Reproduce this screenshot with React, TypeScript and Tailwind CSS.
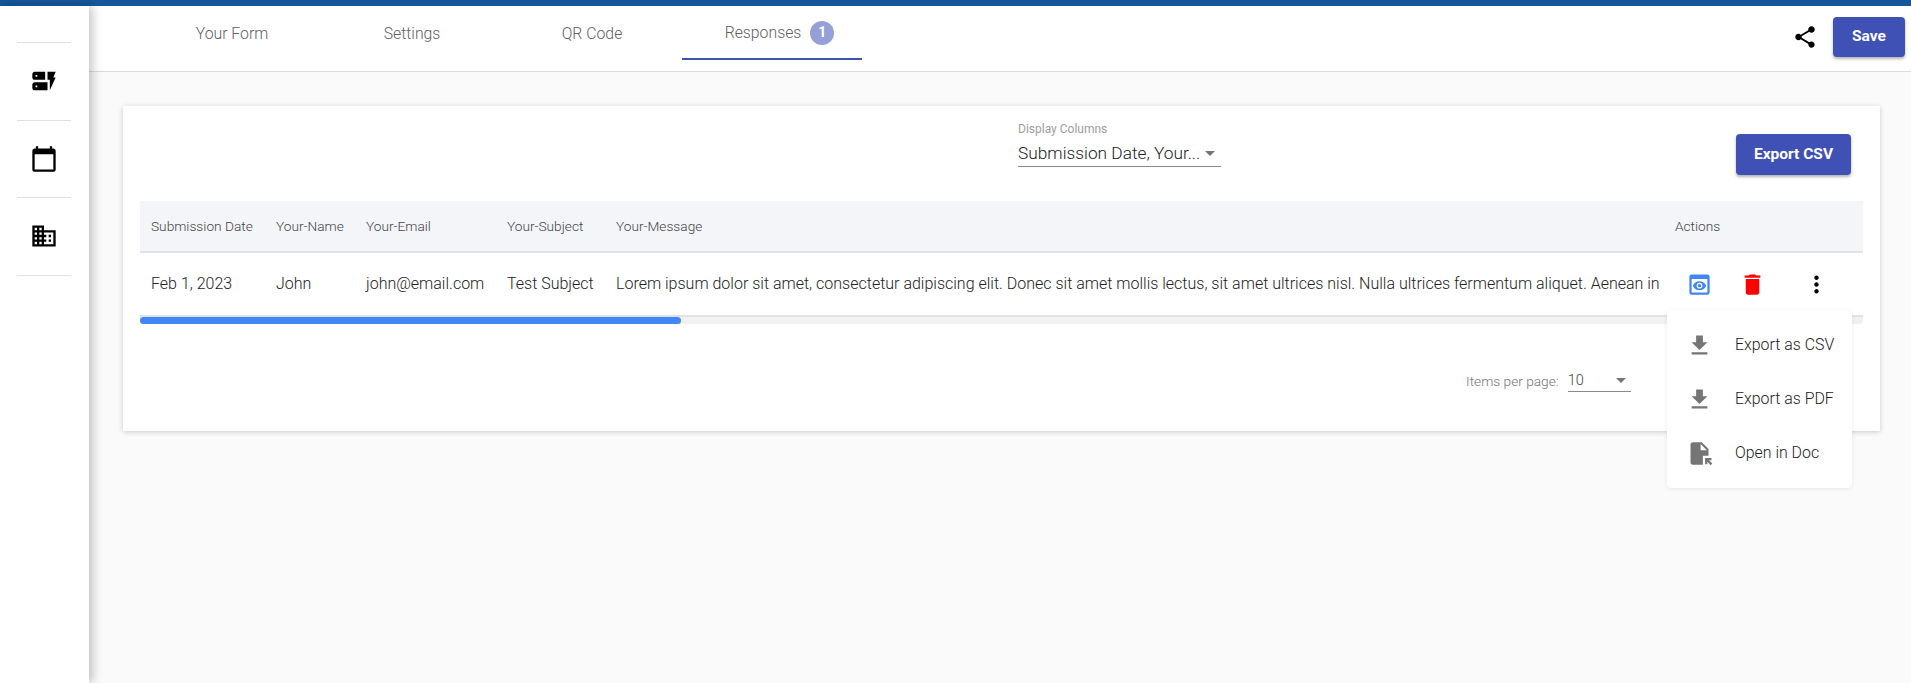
import React from 'react';
import {
  MdDynamicForm,
  MdCalendarToday,
  MdDomain,
  MdShare,
  MdPreview,
  MdDelete,
  MdMoreVert,
  MdFileDownload,
  MdFileOpen,
} from 'react-icons/md';

const navIcons = [MdDynamicForm, MdCalendarToday, MdDomain];

const tabs = ['Your Form', 'Settings', 'QR Code'];

const columns = [
  { label: 'Submission Date', value: 'Feb 1, 2023', width: 'w-[125px]' },
  { label: 'Your-Name', value: 'John', width: 'w-[90px]' },
  { label: 'Your-Email', value: 'john@email.com', width: 'w-[141px]' },
  { label: 'Your-Subject', value: 'Test Subject', width: 'w-[109px]' },
  {
    label: 'Your-Message',
    value:
      'Lorem ipsum dolor sit amet, consectetur adipiscing elit. Donec sit amet mollis lectus, sit amet ultrices nisl. Nulla ultrices fermentum aliquet. Aenean in',
    width: 'w-[1059px]',
  },
];

const menuItems = [
  { label: 'Export as CSV', icon: MdFileDownload },
  { label: 'Export as PDF', icon: MdFileDownload },
  { label: 'Open in Doc', icon: MdFileOpen },
];

function Caret({ className }: { className: string }) {
  return <span className={`w-0 h-0 border-x-[5px] border-x-transparent border-t-[5px] border-t-[#757575] ${className}`} />;
}

function Sidebar() {
  return (
    <aside className="w-[89px] shrink-0 bg-white shadow-[3px_0_10px_rgba(0,0,0,0.25)] z-10 pt-[36px] pl-[17px] pr-[18px]">
      <div className="border-t border-[#e0e0e0]">
        {navIcons.map((Icon, index) => (
          <div key={index} className="h-[77.5px] flex items-center justify-center border-b border-[#e0e0e0] text-black">
            <Icon size={28} />
          </div>
        ))}
      </div>
    </aside>
  );
}

function Header() {
  return (
    <header className="h-[66px] shrink-0 bg-white border-b border-[#dcdcdc] flex items-start pl-[53px] pr-[6px]">
      {tabs.map((tab) => (
        <div key={tab} className="w-[180px] h-[54px] flex items-center justify-center pt-[1px] text-[15.8px] font-light text-[#616161]">
          {tab}
        </div>
      ))}
      <div className="w-[180px] h-[54px] flex items-center justify-center gap-[9px] pt-[1px] pl-[15px] text-[15.8px] font-light text-[#616161] border-b-2 border-[#3f51b5]">
        <span>Responses</span>
        <span className="w-[24px] h-[24px] rounded-full bg-[#959fd8] text-white text-[14px] font-bold flex items-center justify-center">1</span>
      </div>
      <div className="ml-auto flex items-center gap-[15px] pt-[11px]">
        <MdShare size={26} className="text-black" />
        <button className="w-[72px] h-[40px] rounded bg-[#3f51b5] text-white text-[15.5px] font-bold shadow-[0_2px_3px_rgba(0,0,0,0.3)]">
          Save
        </button>
      </div>
    </header>
  );
}

function ResponsesTable() {
  return (
    <div>
      <div className="flex h-[52px] bg-[#f3f5f9] border-b-2 border-[#dfe3e8] items-center text-[13.7px] font-light text-[#444444]">
        {columns.map((col) => (
          <div key={col.label} className={`${col.width} shrink-0 pl-[11px]`}>
            {col.label}
          </div>
        ))}
        <div className="pl-[11px]">Actions</div>
      </div>
      <div className="flex h-[64px] items-center border-b-2 border-[#dfe3e8] text-[16px] font-light text-[#222222]">
        {columns.map((col) => (
          <div key={col.label} className={`${col.width} shrink-0 pl-[11px] pb-[1px] whitespace-nowrap overflow-hidden`}>
            {col.value}
          </div>
        ))}
        <div className="flex items-center pl-[22px]">
          <MdPreview size={27} className="text-[#4285f4]" />
          <MdDelete size={27} className="text-[#ff0000] ml-[26px]" />
          <MdMoreVert size={27} className="text-black ml-[37px]" />
        </div>
      </div>
      <div className="h-[7px] bg-[#f1f1f1] rounded-b">
        <div className="w-[541px] h-[7px] rounded-full bg-[#4285f4]" />
      </div>
    </div>
  );
}

function ExportMenu() {
  return (
    <div className="absolute left-[1578px] top-[238px] w-[185px] py-[8px] bg-white rounded shadow-[0_1px_4px_rgba(0,0,0,0.08)]">
      {menuItems.map(({ label, icon: Icon }) => (
        <div key={label} className="h-[54px] flex items-center pl-[19px] text-[15.9px] font-light text-[#222222]">
          <Icon size={27} className="text-[#757575]" />
          <span className="ml-[22px]">{label}</span>
        </div>
      ))}
    </div>
  );
}

export default function App() {
  return (
    <div className="h-[683px] w-[1911px] overflow-hidden flex flex-col bg-[#fafafa] font-['Roboto',sans-serif]">
      <div className="h-[6px] shrink-0 bg-[#16579c]" />
      <div className="flex flex-1 min-h-0">
        <Sidebar />
        <main className="flex-1 flex flex-col">
          <Header />
          <div className="relative pt-[34px] pl-[34px] pr-[31px]">
            <section className="bg-white h-[325px] px-[17px] shadow-[0_1px_5px_rgba(0,0,0,0.2)]">
              <div className="h-[95px] flex items-start">
                <div className="ml-[878px] mt-[16px] w-[203px]">
                  <div className="text-[12px] text-[#9e9e9e] leading-[14px]">Display Columns</div>
                  <div className="mt-[5px] h-[26px] flex items-center justify-between border-b border-[#8a8a8a] text-[17.3px] font-light text-[#222222]">
                    <span>Submission Date, Your...</span>
                    <Caret className="mr-[6px]" />
                  </div>
                </div>
                <button className="ml-[515px] mt-[28px] w-[115px] h-[41px] rounded bg-[#3f51b5] text-white text-[15.5px] font-bold shadow-[0_2px_3px_rgba(0,0,0,0.3)]">
                  Export CSV
                </button>
              </div>
              <ResponsesTable />
              <div className="flex items-center justify-start mt-[46px] ml-[1326px] text-[13.7px] font-light text-[#757575]">
                <span>Items per page:</span>
                <div className="ml-[9px] w-[63px] h-[22px] flex items-center justify-between border-b border-[#8a8a8a] text-[14.5px] text-[#444444]">
                  <span>10</span>
                  <Caret className="mr-[5px]" />
                </div>
              </div>
            </section>
            <ExportMenu />
          </div>
        </main>
      </div>
    </div>
  );
}
